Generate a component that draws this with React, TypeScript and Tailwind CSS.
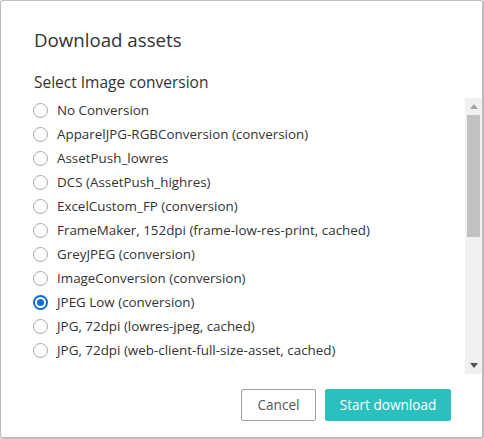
import React from "react";

const options = [
  "No Conversion",
  "ApparelJPG-RGBConversion (conversion)",
  "AssetPush_lowres",
  "DCS (AssetPush_highres)",
  "ExcelCustom_FP (conversion)",
  "FrameMaker, 152dpi (frame-low-res-print, cached)",
  "GreyJPEG (conversion)",
  "ImageConversion (conversion)",
  "JPEG Low (conversion)",
  "JPG, 72dpi (lowres-jpeg, cached)",
  "JPG, 72dpi (web-client-full-size-asset, cached)",
];

function Radio({ checked }: { checked: boolean }) {
  return checked ? (
    <span className="flex h-[15px] w-[15px] shrink-0 items-center justify-center rounded-full border-[2px] border-[#0b6fd1] bg-white">
      <span className="h-[7px] w-[7px] rounded-full bg-[#0b6fd1]" />
    </span>
  ) : (
    <span className="h-[15px] w-[15px] shrink-0 rounded-full border-[1.5px] border-[#a8a8a8] bg-white" />
  );
}

export default function App() {
  const selected = "JPEG Low (conversion)";
  return (
    <div
      className="flex h-[439px] w-[484px] flex-col rounded-[3px] border border-r-2 border-b-2 border-[#bdbdbd] bg-white text-[#333333]"
      style={{ fontFamily: '"Open Sans", "Noto Sans", sans-serif' }}
    >
      <h1 className="mt-[25px] pl-[33px] text-[18.7px] leading-[28px] font-normal text-[#333333]">
        Download assets
      </h1>
      <h2 className="mt-[17px] pl-[33px] text-[15.5px] leading-[22px] font-normal text-[#333333]">
        Select Image conversion
      </h2>
      <div className="mt-[5px] flex h-[276px]">
        <ul className="flex-1 overflow-hidden pl-[32px]">
          {options.map((o) => (
            <li key={o} className="flex h-[24px] items-center gap-[9px] text-[13.4px] whitespace-nowrap">
              <Radio checked={o === selected} />
              <span>{o}</span>
            </li>
          ))}
        </ul>
        <div className="flex w-[17px] flex-col bg-[#f0f0f0]">
          <div className="flex h-[17px] items-center justify-center">
            <svg width="8" height="5" viewBox="0 0 8 5">
              <path d="M4 0 L8 5 L0 5 Z" fill="#a3a3a3" />
            </svg>
          </div>
          <div className="mx-[2px] h-[122px] bg-[#c1c1c1]" />
          <div className="flex-1" />
          <div className="flex h-[17px] items-center justify-center">
            <svg width="8" height="5" viewBox="0 0 8 5">
              <path d="M0 0 L8 0 L4 5 Z" fill="#505050" />
            </svg>
          </div>
        </div>
      </div>
      <div className="mt-[15px] flex justify-end gap-[9px] pr-[31px]">
        <button className="h-[32px] w-[75px] rounded-[2px] border border-[#a0a0a0] bg-white text-[13.6px] text-[#555555]">
          Cancel
        </button>
        <button className="h-[32px] w-[126px] rounded-[2px] bg-[#2bbfbd] text-[13.6px] text-white">
          Start download
        </button>
      </div>
    </div>
  );
}
